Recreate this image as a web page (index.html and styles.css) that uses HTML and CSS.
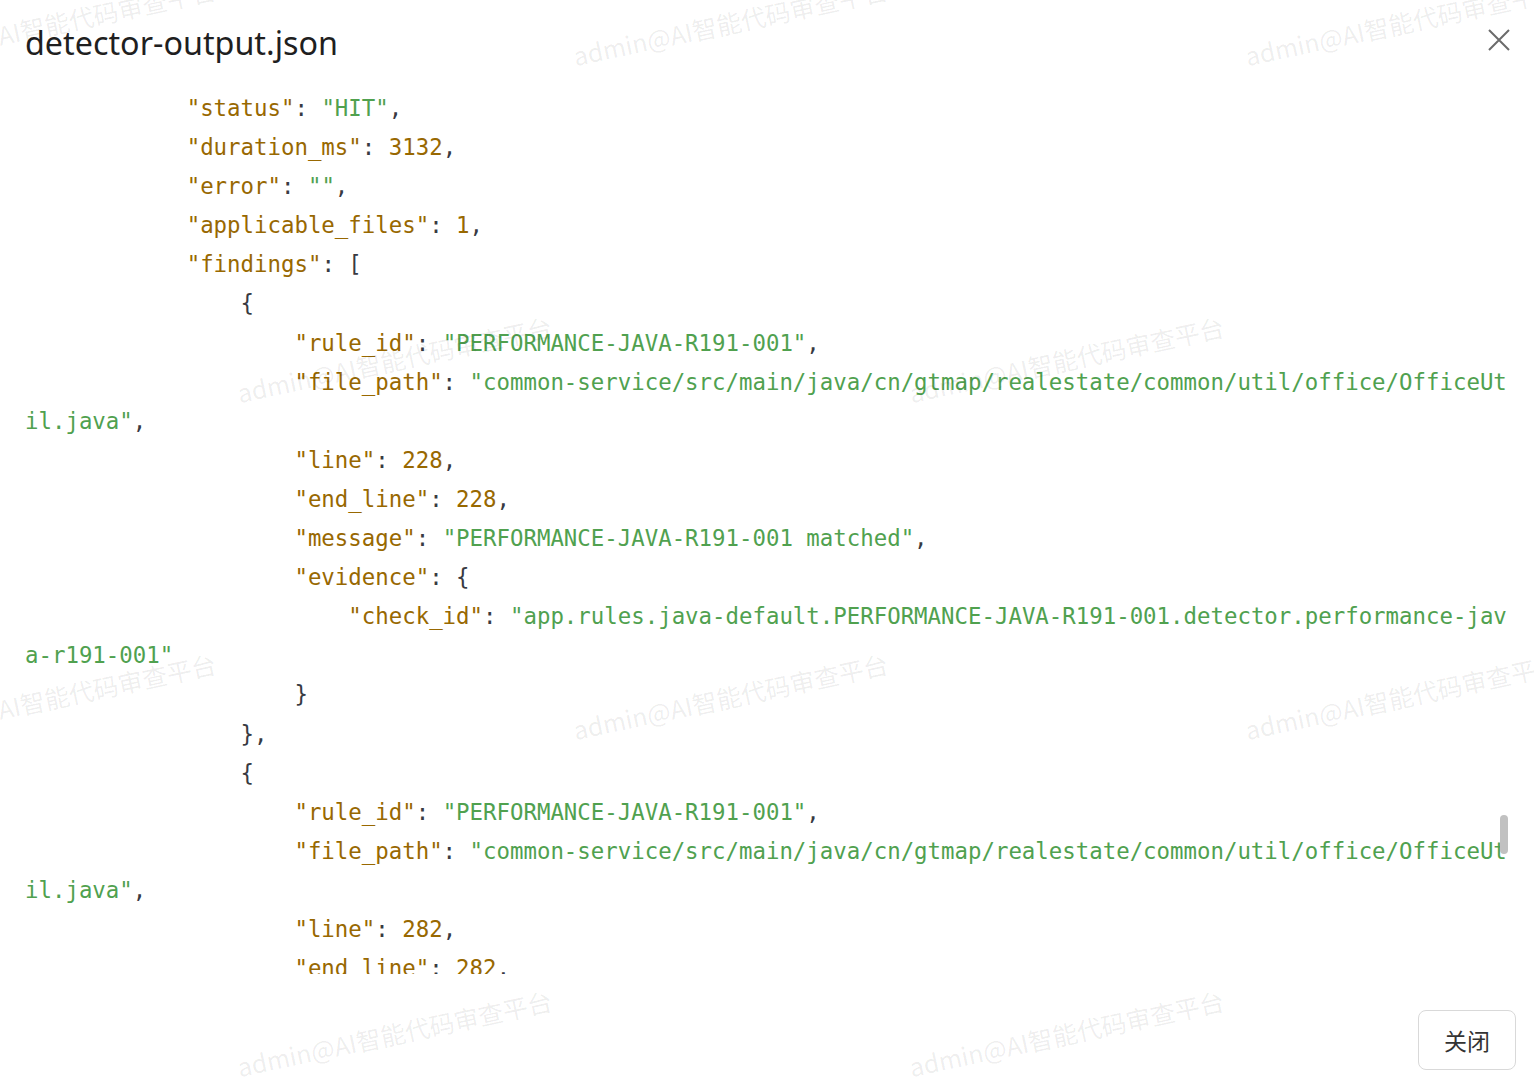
FILE: index.html
```html
<!DOCTYPE html>
<html lang="zh-CN">
<head>
<meta charset="utf-8">
<title>detector-output.json</title>
<link rel="stylesheet" href="styles.css">
</head>
<body>
<div class="modal">
  <header class="modal-header">
    <h1 class="modal-title">detector-output.json</h1>
    <button class="close-btn" aria-label="close">
      <svg width="22" height="22" viewBox="0 0 22 22"><path d="M1 1 L21 21 M21 1 L1 21" stroke="#6b6b6b" stroke-width="2" fill="none"/></svg>
    </button>
  </header>
  <div class="code-wrap">
<pre class="code">            <span class="k">"status"</span>: <span class="s">"HIT"</span>,
            <span class="k">"duration_ms"</span>: <span class="n">3132</span>,
            <span class="k">"error"</span>: <span class="s">""</span>,
            <span class="k">"applicable_files"</span>: <span class="n">1</span>,
            <span class="k">"findings"</span>: [
                {
                    <span class="k">"rule_id"</span>: <span class="s">"PERFORMANCE-JAVA-R191-001"</span>,
                    <span class="k">"file_path"</span>: <span class="s">"common-service/src/main/java/cn/gtmap/realestate/common/util/office/OfficeUtil.java"</span>,
                    <span class="k">"line"</span>: <span class="n">228</span>,
                    <span class="k">"end_line"</span>: <span class="n">228</span>,
                    <span class="k">"message"</span>: <span class="s">"PERFORMANCE-JAVA-R191-001 matched"</span>,
                    <span class="k">"evidence"</span>: {
                        <span class="k">"check_id"</span>: <span class="s">"app.rules.java-default.PERFORMANCE-JAVA-R191-001.detector.performance-java-r191-001"</span>
                    }
                },
                {
                    <span class="k">"rule_id"</span>: <span class="s">"PERFORMANCE-JAVA-R191-001"</span>,
                    <span class="k">"file_path"</span>: <span class="s">"common-service/src/main/java/cn/gtmap/realestate/common/util/office/OfficeUtil.java"</span>,
                    <span class="k">"line"</span>: <span class="n">282</span>,
                    <span class="k">"end_line"</span>: <span class="n">282</span>,
                    <span class="k">"message"</span>: <span class="s">"PERFORMANCE-JAVA-R191-001 matched"</span>,
                    <span class="k">"evidence"</span>: {
</pre>
    <div class="scroll-thumb"></div>
  </div>
  <footer class="modal-footer">
    <button class="btn">关闭</button>
  </footer>
  <div class="watermark" aria-hidden="true">
    <div class="wm-row wm-shift-a">
      <div class="wm-cell"><span>admin@AI智能代码审查平台</span></div>
      <div class="wm-cell"><span>admin@AI智能代码审查平台</span></div>
      <div class="wm-cell"><span>admin@AI智能代码审查平台</span></div>
    </div>
    <div class="wm-row wm-shift-b">
      <div class="wm-cell"><span>admin@AI智能代码审查平台</span></div>
      <div class="wm-cell"><span>admin@AI智能代码审查平台</span></div>
      <div class="wm-cell"><span>admin@AI智能代码审查平台</span></div>
    </div>
    <div class="wm-row wm-shift-a">
      <div class="wm-cell"><span>admin@AI智能代码审查平台</span></div>
      <div class="wm-cell"><span>admin@AI智能代码审查平台</span></div>
      <div class="wm-cell"><span>admin@AI智能代码审查平台</span></div>
    </div>
    <div class="wm-row wm-shift-b">
      <div class="wm-cell"><span>admin@AI智能代码审查平台</span></div>
      <div class="wm-cell"><span>admin@AI智能代码审查平台</span></div>
      <div class="wm-cell"><span>admin@AI智能代码审查平台</span></div>
    </div>
  </div>
</div>
</body>
</html>
```
FILE: styles.css
```css
* { box-sizing: border-box; }
html, body { margin: 0; padding: 0; background: #fff; }
body { font-family: "Noto Sans", "Noto Sans CJK SC", sans-serif; overflow: hidden; }

.modal {
  position: relative;
  width: 1534px;
  height: 1092px;
  display: flex;
  flex-direction: column;
  overflow: hidden;
}

.modal-header {
  height: 89px;
  flex: none;
  display: flex;
  justify-content: space-between;
  align-items: flex-start;
  padding: 21px 24px 0 25px;
}
.modal-title {
  margin: 0;
  font-size: 32.3px;
  line-height: 43px;
  font-weight: 400;
  color: #1f1f1f;
}
.close-btn {
  border: 0;
  background: none;
  padding: 0;
  margin-top: 8px;
  width: 22px;
  height: 22px;
  display: block;
  cursor: pointer;
}
.close-btn svg { display: block; }

.code-wrap {
  position: relative;
  flex: none;
  height: 885px;
  overflow: hidden;
  padding: 0 23px 0 25px;
}
.code {
  margin: 0;
  font-family: "DejaVu Sans Mono", monospace;
  font-size: 22.39px;
  line-height: 39.1px;
  color: #383a42;
  white-space: pre-wrap;
  word-break: break-all;
}
.code .k { color: #986801; }
.code .n { color: #986801; }
.code .s { color: #50a14f; }

.scroll-thumb {
  position: absolute;
  right: 26px;
  top: 726px;
  width: 8px;
  height: 39px;
  border-radius: 4px;
  background: #c1c1c1;
}

.modal-footer {
  flex: none;
  display: flex;
  justify-content: flex-end;
  padding: 36px 18px 0 0;
}
.btn {
  width: 98px;
  height: 60px;
  border: 1px solid #d9d9d9;
  border-radius: 8px;
  background: #fff;
  font-family: "Noto Sans CJK SC", sans-serif;
  font-size: 23px;
  color: #333;
  padding: 0;
  cursor: pointer;
}

.watermark {
  position: absolute;
  inset: 0;
  pointer-events: none;
  overflow: hidden;
  display: flex;
  flex-direction: column;
  margin-top: -147px;
}
.wm-row {
  display: flex;
  flex: none;
  height: 337px;
}
.wm-shift-a { margin-left: -277px; }
.wm-shift-b { margin-left: 59px; }
.wm-cell {
  flex: none;
  width: 672px;
  height: 337px;
  display: flex;
  align-items: center;
  justify-content: center;
}
.wm-cell span {
  display: block;
  white-space: nowrap;
  font-family: "Noto Sans CJK SC", sans-serif;
  font-size: 25px;
  color: rgba(0, 0, 0, 0.075);
  transform: rotate(-12deg);
}
```
